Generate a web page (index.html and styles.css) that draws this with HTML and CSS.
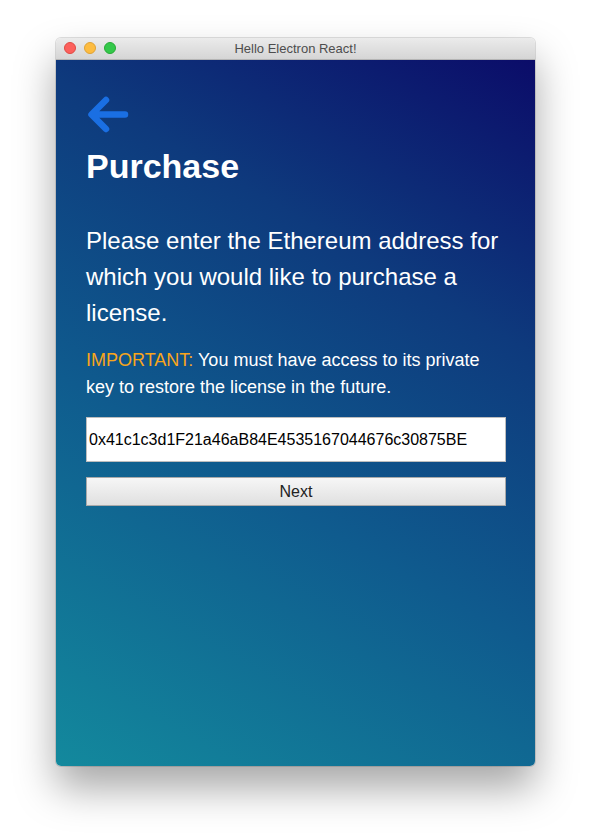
FILE: index.html
```html
<!DOCTYPE html>
<html>
<head>
<meta charset="utf-8">
<link rel="stylesheet" href="styles.css">
</head>
<body>
<div class="window">
  <div class="titlebar">
    <div class="lights">
      <span class="light red"></span>
      <span class="light yellow"></span>
      <span class="light green"></span>
    </div>
    <div class="title">Hello Electron React!</div>
  </div>
  <div class="content">
    <svg class="back" width="44" height="40" viewBox="0 0 44 40">
      <path d="M39 19.5 H6 M20 5 L5.5 19.5 L20 34" fill="none" stroke="#1a6fe3" stroke-width="6.5" stroke-linecap="round" stroke-linejoin="round"/>
    </svg>
    <h1 class="heading">Purchase</h1>
    <p class="lead">Please enter the Ethereum address for which you would like to purchase a license.</p>
    <p class="note"><span class="important">IMPORTANT:</span> You must have access to its private key to restore the license in the future.</p>
    <input class="address" type="text" value="0x41c1c3d1F21a46aB84E4535167044676c30875BE">
    <button class="next">Next</button>
  </div>
</div>
</body>
</html>
```
FILE: styles.css
```css
html, body {
  margin: 0;
  padding: 0;
  background: #ffffff;
  font-family: "Liberation Sans", Arial, sans-serif;
}
body {
  padding: 38px 0 0 56px;
  height: 840px;
  box-sizing: border-box;
}
.window {
  width: 479px;
  height: 728px;
  border-radius: 5px;
  overflow: hidden;
  display: flex;
  flex-direction: column;
  box-shadow: 0 22px 40px rgba(0,0,0,0.35), 0 0 0 1px rgba(0,0,0,0.12);
}
.titlebar {
  height: 22px;
  flex: none;
  position: relative;
  background: linear-gradient(#ebebeb, #d5d5d5);
  border-bottom: 1px solid #b4b4b4;
  box-sizing: border-box;
  display: flex;
  align-items: center;
  justify-content: center;
}
.lights {
  position: absolute;
  left: 8px;
  top: 4px;
  display: flex;
  gap: 8px;
}
.light {
  width: 12px;
  height: 12px;
  border-radius: 50%;
  box-sizing: border-box;
}
.red { background: #fc605c; border: 1px solid #de4a43; }
.yellow { background: #fdbc40; border: 1px solid #dea236; }
.green { background: #34c84a; border: 1px solid #27aa35; }
.title {
  font-size: 13px;
  color: #4d4d4d;
  font-family: "Liberation Sans", Arial, sans-serif;
}
.content {
  flex: 1;
  background: linear-gradient(30deg, #13899d 0%, #0f5b8e 40%, #0e3a7d 70%, #0b0c69 100%);
  padding: 35px 29px 0 30px;
  color: #ffffff;
}
.back {
  display: block;
}
.heading {
  margin: 11px 0 0;
  font-size: 34px;
  line-height: 40px;
  font-weight: bold;
}
.lead {
  margin: 37px 0 0;
  font-size: 24px;
  line-height: 36px;
}
.note {
  margin: 16px 0 0;
  font-size: 18px;
  line-height: 27px;
}
.important {
  color: #f8a51b;
}
.address {
  display: block;
  box-sizing: border-box;
  width: 420px;
  height: 45px;
  margin-top: 16px;
  border: 1px solid #bdbdbd;
  background: #fff;
  padding: 0 2px;
  font-family: "Liberation Sans", Arial, sans-serif;
  font-size: 16px;
  color: #000;
  outline: none;
}
.next {
  display: block;
  box-sizing: border-box;
  width: 420px;
  height: 29px;
  margin-top: 15px;
  border: 1px solid #a9a9a9;
  background: linear-gradient(#f6f6f6, #e0e0e0);
  font-family: "Liberation Sans", Arial, sans-serif;
  font-size: 16px;
  color: #222;
  padding: 0;
}
```
